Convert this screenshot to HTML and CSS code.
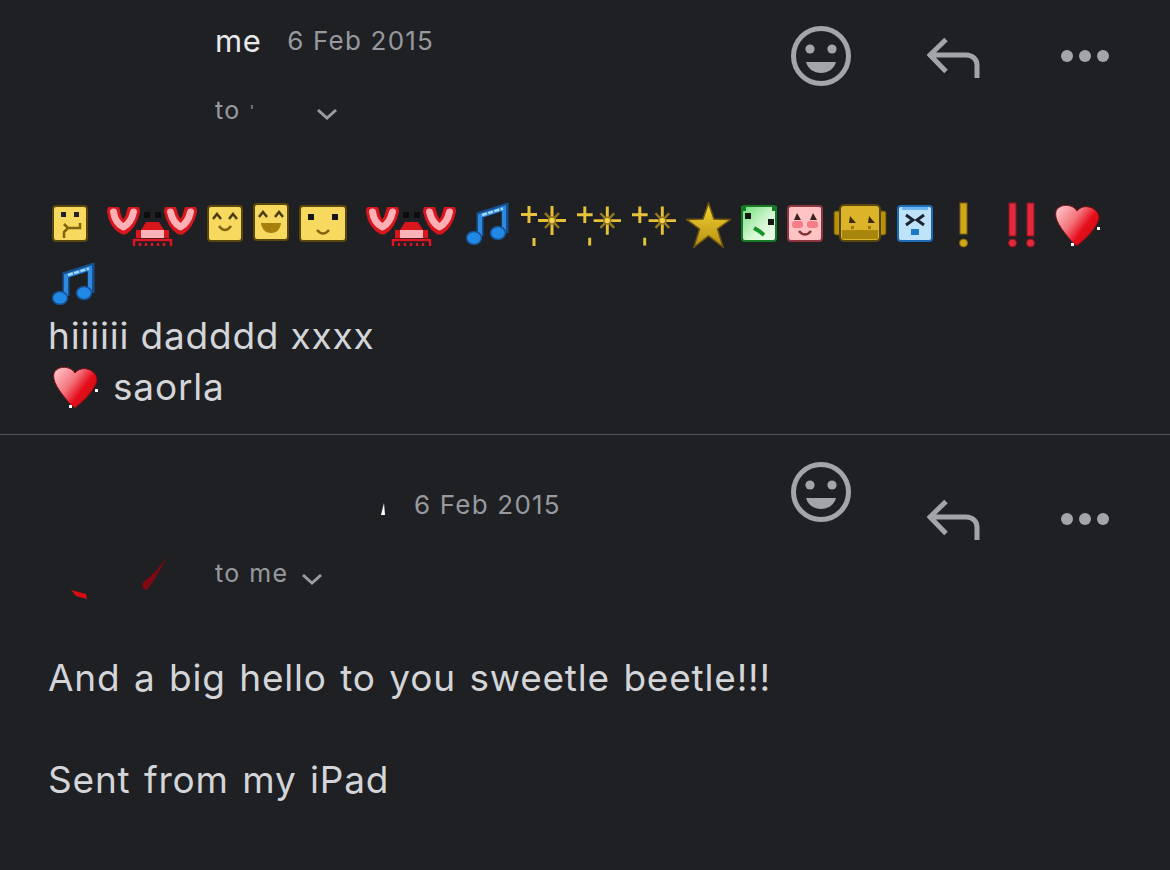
FILE: index.html
```html
<!DOCTYPE html>
<html lang="en">
<head>
<meta charset="utf-8">
<title>Mail thread</title>
<link rel="stylesheet" href="styles.css">
</head>
<body>
<svg class="defs" width="0" height="0" aria-hidden="true">
  <defs>
    <filter id="soft" x="-10%" y="-10%" width="120%" height="120%"><feGaussianBlur stdDeviation="0.6"/></filter>
    <linearGradient id="heartFill" x1="0" y1="0" x2="1" y2="0.7">
      <stop offset="0" stop-color="#ffd0d4"/><stop offset="0.45" stop-color="#f4737c"/><stop offset="0.7" stop-color="#e60f1c"/><stop offset="1" stop-color="#c90010"/>
    </linearGradient>
    <linearGradient id="starFill" x1="0" y1="0" x2="0" y2="1">
      <stop offset="0" stop-color="#f5d534"/><stop offset="1" stop-color="#b59014"/>
    </linearGradient>
    <linearGradient id="greenFill" x1="0" y1="0" x2="1" y2="1">
      <stop offset="0" stop-color="#6fe07a"/><stop offset="0.6" stop-color="#d9f7d6"/><stop offset="1" stop-color="#eefcec"/>
    </linearGradient>
    <symbol id="smile" viewBox="0 0 60 60">
      <circle cx="30" cy="30" r="27.5" fill="none" stroke="currentColor" stroke-width="5"/>
      <circle cx="19" cy="23" r="4.6" fill="currentColor"/><circle cx="41" cy="23" r="4.6" fill="currentColor"/>
      <path d="M15 36H45C43 43 37 47 30 47S17 43 15 36Z" fill="currentColor"/>
    </symbol>
    <symbol id="reply" viewBox="0 0 54 42">
      <path d="M19 2.500 3 18 19 34.500M3 18H39C45.500 18 50 22.500 50 28V41" fill="none" stroke="currentColor" stroke-width="5"/>
    </symbol>
    <symbol id="dots" viewBox="0 0 50 12">
      <circle cx="6" cy="6" r="6" fill="currentColor"/><circle cx="24" cy="6" r="6" fill="currentColor"/><circle cx="42" cy="6" r="6" fill="currentColor"/>
    </symbol>
    <symbol id="chev" viewBox="0 0 22 12">
      <path d="M2 2 11 10 20 2" fill="none" stroke="currentColor" stroke-width="3"/>
    </symbol>
    <symbol id="crab" viewBox="0 0 99 46">
      <g filter="url(#soft)">
        <path d="M15.500 9Q17 21 25.500 26 33 21 35.500 9" fill="none" stroke="#d8141f" stroke-width="13" stroke-linecap="round" stroke-linejoin="round"/>
        <path d="M72.500 9Q75 21 82.500 26 90 21 92.500 9" fill="none" stroke="#d8141f" stroke-width="13" stroke-linecap="round" stroke-linejoin="round"/>
        <path d="M15.500 10Q17 21 25.500 25 33 21 35.500 10" fill="none" stroke="#ffb0b5" stroke-width="7" stroke-linecap="round" stroke-linejoin="round"/>
        <path d="M72.500 10Q75 21 82.500 25 90 21 92.500 10" fill="none" stroke="#ffb0b5" stroke-width="7" stroke-linecap="round" stroke-linejoin="round"/>
        <rect x="46" y="10" width="6" height="6" fill="#090909"/><rect x="57" y="10" width="6" height="6" fill="#090909"/>
        <path d="M38 36V28H43L48 20H61L66 28H71V36Z" fill="#d8141f"/>
        <rect x="43" y="28" width="23" height="8" fill="#ffb3b8"/>
        <path d="M36 37V44M36 38H73M73 37V44M42 41V44M48 41V44M54 41V44M60 41V44M66 41V44" fill="none" stroke="#dd1520" stroke-width="2.500"/>
      </g>
    </symbol>
    <symbol id="note" viewBox="0 0 44 46">
      <g filter="url(#soft)">
        <path d="M14 34V13L39 5V31" fill="none" stroke="#164f8e" stroke-width="7"/>
        <path d="M14 34V14L38 6V31" fill="none" stroke="#2d8ae0" stroke-width="4"/>
        <path d="M16 13 37 6.500" fill="none" stroke="#a9d8f8" stroke-width="2.500" stroke-dasharray="5 1.500"/>
        <ellipse cx="8" cy="36" rx="7.500" ry="6.500" fill="#2488e6" stroke="#164f8e" stroke-width="1.500"/>
        <ellipse cx="32" cy="31" rx="7.500" ry="6.500" fill="#2488e6" stroke="#164f8e" stroke-width="1.500"/>
      </g>
    </symbol>
    <symbol id="spark" viewBox="0 0 46 46">
      <g filter="url(#soft)" fill="none" stroke="#e6c23a" stroke-width="3">
        <path d="M9 4V21M1 12.500H17"/>
        <path d="M32 4V33M18 18.500H46"/>
        <path d="M14 36V44"/>
        <path d="M25 11 39 26M39 11 25 26" stroke-width="2.500" stroke="#97791d"/>
        <circle cx="32" cy="18.500" r="3.500" fill="#f3d14a" stroke="#8f7420" stroke-width="1.500"/>
      </g>
    </symbol>
    <symbol id="star" viewBox="0 0 45 46">
      <path filter="url(#soft)" d="M22.500 1 28 17 44.500 17.500 31.500 27 37 45 22.500 34 8 45 13.500 27 .5 17.500 17 17Z" fill="url(#starFill)" stroke="#6e5510" stroke-width="1.500"/>
    </symbol>
    <symbol id="face-tongue" viewBox="0 0 36 46">
      <g filter="url(#soft)">
        <rect x="1" y="4" width="34" height="35" rx="3" fill="#f8d95f" stroke="#5a4710" stroke-width="2"/>
        <rect x="9" y="10" width="5" height="5" fill="#222"/><rect x="22" y="10" width="5" height="5" fill="#222"/>
        <path d="M28 21V26H16L12 30V36M16 26 12 22" fill="none" stroke="#7f640f" stroke-width="2.500"/>
      </g>
    </symbol>
    <symbol id="face-happy" viewBox="0 0 36 46">
      <g filter="url(#soft)">
        <rect x="1" y="4" width="34" height="35" rx="3" fill="#f8d95f" stroke="#5a4710" stroke-width="2"/>
        <path d="M6 17 10 12 14 17M22 17 26 12 30 17" fill="none" stroke="#4a3a10" stroke-width="2.500"/>
        <path d="M12 24Q18 32 24 24" fill="none" stroke="#7f640f" stroke-width="2.500"/>
      </g>
    </symbol>
    <symbol id="face-laugh" viewBox="0 0 36 46">
      <g filter="url(#soft)">
        <rect x="1" y="2" width="34" height="36" rx="3" fill="#f8d95f" stroke="#5a4710" stroke-width="2"/>
        <path d="M6 15 10 10 14 15M22 15 26 10 30 15" fill="none" stroke="#4a3a10" stroke-width="2.500"/>
        <path d="M8 21H28C27 28 23 31 18 31S9 28 8 21Z" fill="#a67f08"/>
      </g>
    </symbol>
    <symbol id="face-wide" viewBox="0 0 48 46">
      <g filter="url(#soft)">
        <rect x="1" y="4" width="46" height="35" rx="3" fill="#f8d95f" stroke="#5a4710" stroke-width="2"/>
        <rect x="9" y="12" width="6" height="6" fill="#161616"/><rect x="33" y="12" width="6" height="6" fill="#161616"/>
        <path d="M18 28Q24 35 30 28" fill="none" stroke="#7f640f" stroke-width="2.500"/>
      </g>
    </symbol>
    <symbol id="face-green" viewBox="0 0 36 46">
      <g filter="url(#soft)">
        <rect x="1" y="4" width="34" height="35" rx="3" fill="url(#greenFill)" stroke="#157a27" stroke-width="2"/>
        <rect x="4" y="11" width="6" height="6" fill="#141414"/><rect x="27" y="17" width="6" height="6" fill="#141414"/>
        <rect x="0" y="4" width="5" height="5" fill="#157a27"/><rect x="31" y="4" width="5" height="5" fill="#157a27"/>
        <path d="M13 26 18 29 23 33" fill="none" stroke="#17942c" stroke-width="4"/>
      </g>
    </symbol>
    <symbol id="face-pink" viewBox="0 0 36 46">
      <g filter="url(#soft)">
        <rect x="1" y="4" width="34" height="35" rx="3" fill="#ffc3c6" stroke="#8f3640" stroke-width="2"/>
        <path d="M10 11 14 18H7ZM26 11 30 18H23Z" fill="#3a2020"/>
        <rect x="5" y="19" width="11" height="7" rx="3" fill="#f47d86"/><rect x="20" y="19" width="11" height="7" rx="3" fill="#f47d86"/>
        <path d="M12 29Q18 36 24 29" fill="none" stroke="#7f3030" stroke-width="2.500"/>
      </g>
    </symbol>
    <symbol id="face-gold" viewBox="0 0 54 46">
      <g filter="url(#soft)">
        <rect x="1" y="9" width="52" height="24" rx="2" fill="#b8920f" stroke="#5a4710"/>
        <rect x="7" y="3" width="40" height="36" rx="4" fill="#dcb42a" stroke="#5a4710" stroke-width="2"/>
        <rect x="9" y="28" width="36" height="9" fill="#a88610"/>
        <path d="M17 14 23 21H16ZM36 14 42 21H35Z" fill="#3a2c08"/>
        <rect x="18" y="24" width="3" height="3" fill="#9a7a10"/><rect x="35" y="24" width="3" height="3" fill="#9a7a10"/>
      </g>
    </symbol>
    <symbol id="face-blue" viewBox="0 0 36 46">
      <g filter="url(#soft)">
        <rect x="1" y="4" width="34" height="35" rx="3" fill="#bfe3fb" stroke="#1e6cb8" stroke-width="2"/>
        <rect x="5" y="5" width="26" height="3" fill="#6cb6ee"/>
        <path d="M9 13 16 18 9 23M27 13 20 18 27 23" fill="none" stroke="#1a2430" stroke-width="3"/>
        <rect x="14" y="27" width="8" height="6" fill="#1e78c8"/>
      </g>
    </symbol>
    <symbol id="bang" viewBox="0 0 41 46">
      <g filter="url(#soft)" fill="#d2a716" stroke="#80640f">
        <rect x="17" y="1" width="7" height="31"/><circle cx="20.500" cy="41" r="4"/>
      </g>
    </symbol>
    <symbol id="bangs" viewBox="0 0 51 46">
      <g filter="url(#soft)" fill="#e3293a" stroke="#8f1420">
        <rect x="15" y="1" width="7" height="33"/><circle cx="18.500" cy="41" r="4"/>
        <rect x="33" y="1" width="7" height="33"/><circle cx="36.500" cy="41" r="4"/>
      </g>
    </symbol>
    <symbol id="heart" viewBox="0 0 45 44">
      <path filter="url(#soft)" d="M22 8C18 1 5 0 1 8-1 16 5 25 18 40L22 43C34 33 41 25 44 16 45 5 29-1 22 8Z" fill="url(#heartFill)" stroke="#7d0d16" stroke-width="1"/>
      <rect x="42" y="24" width="3" height="3" fill="#fff"/><rect x="16" y="40" width="3" height="3" fill="#fff"/>
    </symbol>
  </defs>
</svg>

<main class="thread">
  <article class="msg msg-first">
    <header class="head">
      <div class="meta">
        <div class="from"><span class="name">me</span><time class="date date-first">6 Feb 2015</time></div>
        <div class="to to-first"><span>to</span><span class="speck">'</span><svg class="chev" width="22" height="12"><use href="#chev"/></svg></div>
      </div>
      <div class="actions">
        <svg class="smile" width="60" height="60"><use href="#smile"/></svg>
        <svg class="reply" width="54" height="42"><use href="#reply"/></svg>
        <svg class="dots" width="50" height="12"><use href="#dots"/></svg>
      </div>
    </header>
    <div class="emoji-run">
      <svg width="36" height="46"><use href="#face-tongue"/></svg>
      <svg width="99" height="46"><use href="#crab"/></svg>
      <svg width="36" height="46"><use href="#face-happy"/></svg>
      <svg width="36" height="46"><use href="#face-laugh"/></svg>
      <svg width="48" height="46"><use href="#face-wide"/></svg>
      <svg width="99" height="46"><use href="#crab"/></svg>
      <svg width="44" height="46"><use href="#note"/></svg>
      <svg width="46" height="46"><use href="#spark"/></svg>
      <svg width="45" height="46"><use href="#spark"/></svg>
      <svg width="45" height="46"><use href="#spark"/></svg>
      <svg width="45" height="46"><use href="#star"/></svg>
      <svg width="36" height="46"><use href="#face-green"/></svg>
      <svg width="36" height="46"><use href="#face-pink"/></svg>
      <svg width="54" height="46"><use href="#face-gold"/></svg>
      <svg width="36" height="46"><use href="#face-blue"/></svg>
      <svg width="41" height="46"><use href="#bang"/></svg>
      <svg width="51" height="46"><use href="#bangs"/></svg>
      <svg width="45" height="46"><use href="#heart"/></svg>
      <svg width="44" height="46"><use href="#note"/></svg>
    </div>
    <p class="body body-first">hiiiiii dadddd xxxx</p>
    <p class="body signed"><svg class="sign-heart" width="45" height="44"><use href="#heart"/></svg><span>saorla</span></p>
  </article>

  <article class="msg msg-second">
    <header class="head head-second">
      <svg class="flecks" width="216" height="60" viewBox="0 0 216 60" aria-hidden="true">
        <path d="M71 35 86 39 87 44 76 41Z" fill="#d80d12"/>
        <path d="M167 1C161 15 153 27 147 35L142 33 143 27C151 22 161 11 167 1Z" fill="#7d0a10"/>
      </svg>
      <div class="meta">
        <div class="from"><span class="name-slot"><svg width="4" height="12" viewBox="0 0 4 12"><path d="M3 0 4 12H0Z" fill="#fff"/></svg></span><time class="date">6 Feb 2015</time></div>
        <div class="to to-second"><span>to me</span><svg class="chev" width="22" height="12"><use href="#chev"/></svg></div>
      </div>
      <div class="actions actions-second">
        <svg class="smile" width="60" height="60"><use href="#smile"/></svg>
        <svg class="reply" width="54" height="42"><use href="#reply"/></svg>
        <svg class="dots" width="50" height="12"><use href="#dots"/></svg>
      </div>
    </header>
    <div class="copy">
      <p class="body">And a big hello to you sweetle beetle!!!</p>
      <p class="body">&nbsp;</p>
      <p class="body">Sent from my iPad</p>
    </div>
  </article>
</main>
</body>
</html>
```

FILE: styles.css
```css
* { box-sizing: border-box; }

html, body {
  margin: 0;
  height: 100%;
  overflow: hidden;
  background: #1f2024;
}

body {
  font-family: Inter, Roboto, "Liberation Sans", sans-serif;
  color: #d4d5d8;
}

.defs { display: block; height: 0; }

.thread { display: block; }

.msg { padding: 0 48px; }

.msg-first {
  padding-top: 20px;
  padding-bottom: 22px;
  border-bottom: 1px solid #55565a;
}

.msg-second { padding-top: 26px; }

.head { display: flex; align-items: flex-start; }

.head-second { position: relative; }

.flecks {
  position: absolute;
  left: -48px;
  top: 94px;
}

.meta {
  flex: 1;
  margin-left: 167px;
}

.head-second .meta { padding-top: 23px; }

.from {
  display: flex;
  align-items: center;
  height: 40px;
  font-size: 26px;
}

.name {
  font-size: 31px;
  letter-spacing: 0.5px;
  color: #e8e9ea;
  margin-right: 26px;
}

.date {
  color: #98999e;
  letter-spacing: 1.2px;
}

.date-first { margin-top: 1px; }

.name-slot {
  display: flex;
  width: 199px;
  justify-content: flex-end;
  padding: 10px 29px 0 0;
}

.to {
  display: flex;
  align-items: center;
  height: 40px;
  font-size: 25px;
  letter-spacing: 1.4px;
  color: #98999e;
}

.to-first { margin-top: 30px; }
.to-second { margin-top: 29px; }

.speck { margin: 0 61px 0 9px; font-size: 14px; }

.chev { color: #9b9ca1; margin: 8px 0 0 0; }

.to-second .chev { margin: 12px 0 0 13px; }

.actions {
  display: flex;
  align-items: flex-start;
  color: #a4a5ab;
  width: 341px;
  margin-right: -10px;
  padding-top: 6px;
}

.reply { margin: 11px 0 0 76px; }
.dots { margin: 24px 0 0 80px; }

.actions-second { padding-top: 1px; }
.actions-second .reply { margin-top: 37px; }
.actions-second .dots { margin-top: 51px; }

.emoji-run {
  display: flex;
  flex-wrap: wrap;
  gap: 14px 10px;
  margin-top: 72px;
  padding-left: 4px;
}

.body {
  margin: 0;
  font-size: 37px;
  line-height: 51px;
  letter-spacing: 0.8px;
}

.body-first { margin-top: 2px; }

.signed { display: flex; align-items: center; }

.sign-heart { margin: 0 15px 0 5px; }

.copy { margin-top: 59px; }

.copy .body { word-spacing: 2.3px; }
```
